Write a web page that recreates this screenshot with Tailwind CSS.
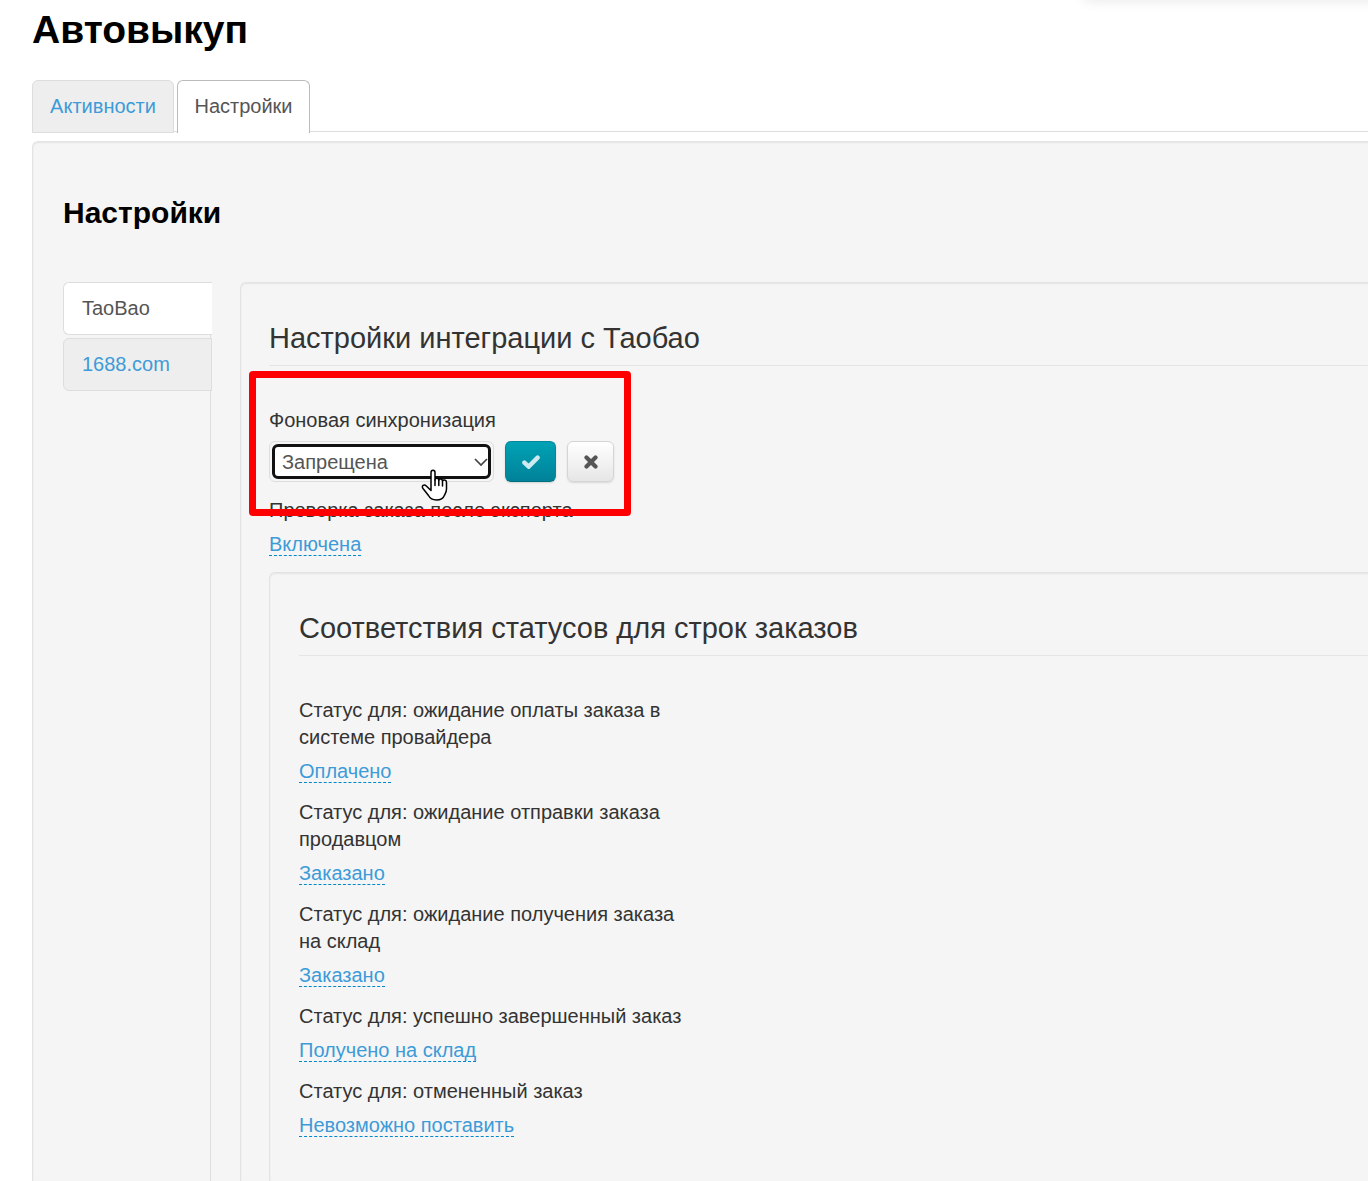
<!doctype html>
<html lang="ru">
<head>
  <meta charset="UTF-8">
  <meta name="viewport" content="width=device-width, initial-scale=1.0">
  <title>Автовыкуп</title>
  <script src="https://cdn.jsdelivr.net/npm/@tailwindcss/browser@4"></script>
</head>
<body class="bg-white font-['Liberation_Sans',Arial,sans-serif] text-[20px] leading-[27px] text-[#333]">

<div class="relative flex flex-col min-h-screen pl-8 pt-[10px] overflow-hidden">
  <!-- shadow of the toolbar above -->
  <div class="absolute -right-4 -top-10 h-10 w-[300px] shadow-[0_0_14px_rgba(0,0,0,0.1)]"></div>

  <h1 class="text-[39px] leading-10 font-bold text-black">Автовыкуп</h1>

  <nav class="flex gap-[3px] mt-[30px] h-[52px] border-b border-[#ddd]">
    <a href="#activity" class="w-[142px] h-[53px] pt-3 text-center bg-[#eee] border border-[#ddd] rounded-t-md text-[#3d9bd8]">Активности</a>
    <a href="#settings" class="w-[133px] h-[53px] pt-3 text-center bg-white border border-b-0 border-[#bbb] rounded-t-md text-[#555]">Настройки</a>
  </nav>

  <main class="flex-1 flex flex-col mt-[9px] -mr-1 pl-[30px] pt-[51px] bg-[#f5f5f5] border-t border-l border-[#e3e3e3] rounded-tl-md shadow-[inset_0_1px_2px_rgba(0,0,0,0.07)]">
    <h2 class="text-[30px] leading-10 font-bold text-black">Настройки</h2>

    <div class="flex-1 flex mt-[49px]">
      <nav class="w-[148px] shrink-0 border-r border-[#ddd]">
        <a href="#taobao" class="block -mr-0.5 h-[53px] pl-[18px] pt-3 bg-white border border-r-0 border-[#ddd] rounded-l-md text-[#555]">TaoBao</a>
        <a href="#1688" class="block -mr-0.5 mt-[3px] h-[53px] pl-[18px] pt-3 bg-[#eee] border border-[#ddd] rounded-l-md text-[#3d9bd8]">1688.com</a>
      </nav>

      <section class="flex-1 flex flex-col ml-[29px] pl-7 pt-7 border-t border-l border-[#e3e3e3] rounded-tl-md shadow-[inset_0_1px_2px_rgba(0,0,0,0.07)]">
        <h3 class="text-[29px] leading-[54px] h-[55px] border-b border-[#e5e5e5]">Настройки интеграции с Таобао</h3>

        <div class="relative mt-[41px]">
          <label for="sync" class="block">Фоновая синхронизация</label>
          <form class="flex mt-[7px] mb-[15px]">
            <div class="relative w-[225px] h-[41px] p-0.5 border border-[#ddd] rounded-md">
              <select id="sync" class="appearance-none w-full h-full pl-[7px] bg-white border-[3px] border-[#111] rounded-md text-[#555] leading-6">
                <option>Запрещена</option>
                <option>Разрешена</option>
              </select>
              <svg class="absolute right-[5px] top-4 w-[14px] h-[9px] pointer-events-none" viewBox="0 0 14 9" fill="none" stroke="#444" stroke-width="1.7"><path d="M1 1l6 6 6-6"/></svg>
            </div>
            <button type="submit" aria-label="Сохранить" class="flex items-center justify-center ml-[11px] w-[51px] h-[41px] rounded-md border border-[#00889c] border-b-[#006f82] bg-linear-to-b from-[#00a2b5] to-[#008299] shadow-[0_1px_2px_rgba(0,0,0,0.15)]">
              <svg class="w-[18px] h-[14px]" viewBox="0 0 18 14" fill="none" stroke="#cdeaf0" stroke-width="4.4" stroke-linecap="round"><path d="M2.400 7.600l4.300 4L15.600 2.600"/></svg>
            </button>
            <button type="button" aria-label="Отмена" class="flex items-center justify-center ml-[11px] w-[47px] h-[41px] rounded-md border border-[#d5d5d5] bg-linear-to-b from-white to-[#e6e6e6] shadow-[0_1px_2px_rgba(0,0,0,0.12)]">
              <svg class="w-[14px] h-[14px]" viewBox="0 0 14 14" fill="none" stroke="#555" stroke-width="4.2" stroke-linecap="round"><path d="M2.500 2.500l9 9M11.500 2.500l-9 9"/></svg>
            </button>
          </form>

          <!-- highlighted area and pointer -->
          <div class="absolute -left-5 -top-9 w-[382px] h-[145px] border-[7px] border-[#f00] rounded-[4px] pointer-events-none z-10"></div>
          <svg class="absolute left-[152px] top-[62px] w-7 h-8 z-20 pointer-events-none" viewBox="0 0 28 32" fill="#fff" stroke="#000" stroke-width="1.5" stroke-linejoin="round" stroke-linecap="round">
            <path d="M10 19.500V3.500C10 .4 14 .4 14 3.500V11C14 8.500 17.800 8.700 17.800 11.300C18 9.200 21.500 9.500 21.500 12C22 10.300 25.500 10.700 25.500 13.500V20C25.500 23 24.200 24.600 23.300 26.500C22 30 19 31 15.500 31C11.500 31 9 29.500 7.500 26.500L2 19.500C0 16.700 3.200 14.900 5.300 17L10 21.500Z"/>
            <path d="M14 11v5.500M17.800 11.300v5.200M21.500 12v5"/>
          </svg>
        </div>

        <p>Проверка заказа после экспорта</p>
        <p class="mt-[7px]"><a href="#check" class="text-[#3d9bd8] border-b border-dashed border-[#0088cc]">Включена</a></p>

        <section class="flex-1 mt-[14px] pl-[29px] pt-7 pb-10 border-t border-l border-[#e3e3e3] rounded-tl-md shadow-[inset_0_1px_2px_rgba(0,0,0,0.07)]">
          <h3 class="text-[29px] leading-[54px] h-[55px] border-b border-[#e5e5e5]">Соответствия статусов для строк заказов</h3>

          <dl class="mt-[41px] w-[384px]">
            <dt>Статус для: ожидание оплаты заказа в системе провайдера</dt>
            <dd class="mt-[7px] mb-[14px]"><a href="#paid" class="text-[#3d9bd8] border-b border-dashed border-[#0088cc]">Оплачено</a></dd>
            <dt>Статус для: ожидание отправки заказа продавцом</dt>
            <dd class="mt-[7px] mb-[14px]"><a href="#sending" class="text-[#3d9bd8] border-b border-dashed border-[#0088cc]">Заказано</a></dd>
            <dt>Статус для: ожидание получения заказа на склад</dt>
            <dd class="mt-[7px] mb-[14px]"><a href="#receiving" class="text-[#3d9bd8] border-b border-dashed border-[#0088cc]">Заказано</a></dd>
            <dt>Статус для: успешно завершенный заказ</dt>
            <dd class="mt-[7px] mb-[14px]"><a href="#done" class="text-[#3d9bd8] border-b border-dashed border-[#0088cc]">Получено на склад</a></dd>
            <dt>Статус для: отмененный заказ</dt>
            <dd class="mt-[7px]"><a href="#cancelled" class="text-[#3d9bd8] border-b border-dashed border-[#0088cc]">Невозможно поставить</a></dd>
          </dl>
        </section>
      </section>
    </div>
  </main>
</div>

</body>
</html>
